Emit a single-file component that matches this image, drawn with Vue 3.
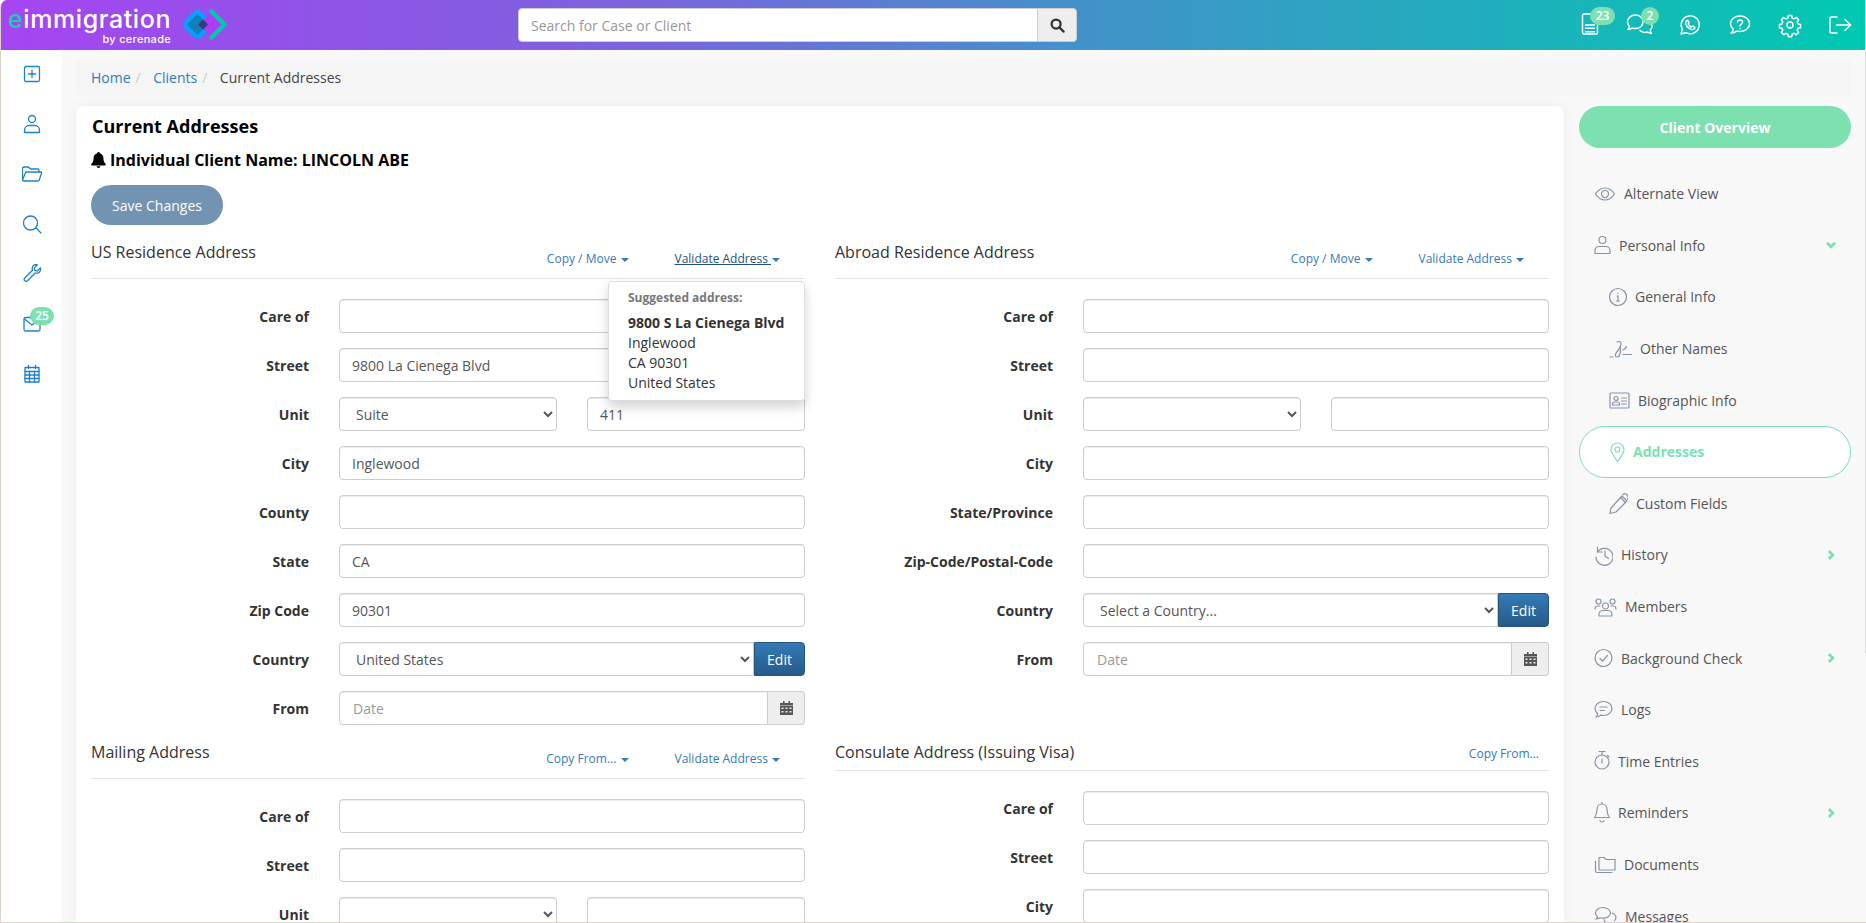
<template>
  <div class="page">
    <header class="topbar">
      <div class="logo">
        <div class="logo-text">
          <div class="logo-name"><span class="logo-e">e</span>immigration</div>
          <div class="logo-by">by cerenade</div>
        </div>
        <svg class="logo-mark" width="46" height="36" viewBox="0 0 46 36">
          <rect x="6.750" y="7.750" width="19.500" height="19.500" rx="4" transform="rotate(45 16.500 17.500)" fill="#1180b8" stroke="#0a9cff" stroke-width="4.500" />
          <path d="M30.500 5l12.500 12.500L30.500 30 18 17.500z" fill="#a93ff5" />
          <path d="M22 12.500l5 5-5 5-5-5z" fill="#2c3f78" />
          <path d="M30.500 4.500L43.500 17.500 30.500 30.500" fill="none" stroke="#00c9ae" stroke-width="4.500" stroke-linejoin="round" stroke-linecap="round" />
        </svg>
      </div>

      <div class="search">
        <input class="search-input" type="text" placeholder="Search for Case or Client" />
        <button class="search-btn">
          <svg width="15" height="15" viewBox="0 0 16 16" fill="none" stroke="#333" stroke-width="2.400">
            <circle cx="6.500" cy="6.500" r="4.800" />
            <path d="M10 10l4.500 4.500" stroke-linecap="round" />
          </svg>
        </button>
      </div>

      <nav class="top-icons">
        <div v-for="item in topIcons" :key="item.name" class="top-icon">
          <svg width="24" height="24" viewBox="0 0 24 24" fill="none" stroke="#fff" stroke-width="1.500" stroke-linecap="round" stroke-linejoin="round">
            <path v-for="d in item.paths" :key="d" :d="d" />
          </svg>
          <span v-if="item.badge" class="top-badge" :class="item.name">{{ item.badge }}</span>
        </div>
      </nav>
    </header>

    <div class="body">
      <aside class="leftbar">
        <div v-for="item in leftIcons" :key="item.name" class="left-icon">
          <svg width="20" height="20" viewBox="0 0 20 20" fill="none" stroke="#1f82c8" stroke-width="1.300" stroke-linecap="round" stroke-linejoin="round">
            <path v-for="d in item.paths" :key="d" :d="d" />
          </svg>
          <span v-if="item.badge" class="left-badge">{{ item.badge }}</span>
        </div>
      </aside>

      <div class="content">
        <div class="breadcrumb">
          <a class="crumb">Home</a><span class="sep">/</span>
          <a class="crumb">Clients</a><span class="sep">/</span>
          <span class="crumb-now">Current Addresses</span>
        </div>

        <div class="columns">
          <main class="card">
            <h1 class="title">Current Addresses</h1>
            <div class="client-name">
              <svg width="15" height="16" viewBox="0 0 15 16" fill="#000">
                <path d="M7.500 0a1.200 1.200 0 0 0-1.200 1.300C3.900 1.900 2.600 3.800 2.600 6c0 3.600-1.100 4.700-2.100 5.800-.5.600-.1 1.700.8 1.700h12.400c.9 0 1.300-1.100.8-1.700-1-1.100-2.100-2.200-2.100-5.800 0-2.200-1.300-4.100-3.700-4.700A1.200 1.200 0 0 0 7.500 0zM5.600 14.300a1.900 1.700 0 0 0 3.800 0z" />
              </svg>
              <span>Individual Client Name: LINCOLN ABE</span>
            </div>
            <button class="save-btn">Save Changes</button>

            <div class="form-grid">
              <section class="address">
                <div class="section-head">
                  <h2>US Residence Address</h2>
                  <div class="actions">
                    <a class="action">Copy / Move <i class="caret"></i></a>
                    <a class="action underlined">Validate Address <i class="caret"></i></a>
                  </div>
                </div>
                <div class="rows">
                  <div class="row"><label>Care of</label><input class="field" /></div>
                  <div class="row"><label>Street</label><input class="field" value="9800 La Cienega Blvd" /></div>
                  <div class="row">
                    <label>Unit</label>
                    <select class="field half"><option>Suite</option></select>
                    <input class="field half" value="411" />
                  </div>
                  <div class="row"><label>City</label><input class="field" value="Inglewood" /></div>
                  <div class="row"><label>County</label><input class="field" /></div>
                  <div class="row"><label>State</label><input class="field" value="CA" /></div>
                  <div class="row"><label>Zip Code</label><input class="field" value="90301" /></div>
                  <div class="row">
                    <label>Country</label>
                    <div class="group">
                      <select class="field joined"><option>United States</option></select>
                      <button class="edit-btn">Edit</button>
                    </div>
                  </div>
                  <div class="row">
                    <label>From</label>
                    <div class="group">
                      <input class="field joined" placeholder="Date" />
                      <span class="addon"><svg width="13" height="14" viewBox="0 0 13 14" fill="#555"><path d="M3 0h1.500v2H3zM8.500 0H10v2H8.500zM0 2h13v2.500H0zM0 5h13v9H0zM1.500 6.500v1.500h2V6.500zm4 0v1.500h2V6.500zm4 0v1.500h2V6.500zm-8 3.500v1.500h2V10zm4 0v1.500h2V10zm4 0v1.500h2V10z" fill-rule="evenodd" /></svg></span>
                    </div>
                  </div>
                </div>
                <div class="popover">
                  <div class="pop-title">Suggested address:</div>
                  <div class="pop-street">9800 S La Cienega Blvd</div>
                  <div>Inglewood</div>
                  <div>CA 90301</div>
                  <div>United States</div>
                </div>
              </section>

              <section class="address">
                <div class="section-head">
                  <h2>Abroad Residence Address</h2>
                  <div class="actions">
                    <a class="action">Copy / Move <i class="caret"></i></a>
                    <a class="action">Validate Address <i class="caret"></i></a>
                  </div>
                </div>
                <div class="rows">
                  <div class="row"><label>Care of</label><input class="field" /></div>
                  <div class="row"><label>Street</label><input class="field" /></div>
                  <div class="row">
                    <label>Unit</label>
                    <select class="field half"><option></option></select>
                    <input class="field half" />
                  </div>
                  <div class="row"><label>City</label><input class="field" /></div>
                  <div class="row"><label>State/Province</label><input class="field" /></div>
                  <div class="row"><label>Zip-Code/Postal-Code</label><input class="field" /></div>
                  <div class="row">
                    <label>Country</label>
                    <div class="group">
                      <select class="field joined"><option>Select a Country...</option></select>
                      <button class="edit-btn">Edit</button>
                    </div>
                  </div>
                  <div class="row">
                    <label>From</label>
                    <div class="group">
                      <input class="field joined" placeholder="Date" />
                      <span class="addon"><svg width="13" height="14" viewBox="0 0 13 14" fill="#555"><path d="M3 0h1.500v2H3zM8.500 0H10v2H8.500zM0 2h13v2.500H0zM0 5h13v9H0zM1.500 6.500v1.500h2V6.500zm4 0v1.500h2V6.500zm4 0v1.500h2V6.500zm-8 3.500v1.500h2V10zm4 0v1.500h2V10zm4 0v1.500h2V10z" fill-rule="evenodd" /></svg></span>
                    </div>
                  </div>
                </div>
              </section>

              <section class="address">
                <div class="section-head">
                  <h2>Mailing Address</h2>
                  <div class="actions">
                    <a class="action">Copy From... <i class="caret"></i></a>
                    <a class="action">Validate Address <i class="caret"></i></a>
                  </div>
                </div>
                <div class="rows">
                  <div class="row"><label>Care of</label><input class="field" /></div>
                  <div class="row"><label>Street</label><input class="field" /></div>
                  <div class="row">
                    <label>Unit</label>
                    <select class="field half"><option></option></select>
                    <input class="field half" />
                  </div>
                </div>
              </section>

              <section class="address consulate">
                <div class="section-head">
                  <h2>Consulate Address (Issuing Visa)</h2>
                  <div class="actions">
                    <a class="action">Copy From...</a>
                  </div>
                </div>
                <div class="rows">
                  <div class="row"><label>Care of</label><input class="field" /></div>
                  <div class="row"><label>Street</label><input class="field" /></div>
                  <div class="row"><label>City</label><input class="field" /></div>
                </div>
              </section>
            </div>
          </main>

          <aside class="sidemenu">
            <button class="overview-btn">Client Overview</button>
            <ul class="menu">
              <li v-for="item in menu" :key="item.label" class="menu-item" :class="{ sub: item.sub, active: item.active }">
                <svg :width="item.w" height="24" :viewBox="`0 0 ${item.w} 24`" fill="none" :stroke="item.active ? '#7de0b0' : '#8a93a6'" stroke-width="1.200" stroke-linecap="round" stroke-linejoin="round">
                  <path v-for="d in item.paths" :key="d" :d="d" />
                </svg>
                <span>{{ item.label }}</span>
                <svg v-if="item.arrow" class="arrow" :class="item.arrow" width="10" height="10" viewBox="0 0 10 10" fill="none" stroke="#7de0b0" stroke-width="2.800">
                  <path d="M2.800 1l4 4-4 4" />
                </svg>
              </li>
            </ul>
          </aside>
        </div>
      </div>
    </div>
    <div class="scroll-thumb"></div>
  </div>
</template>

<script setup>
const topIcons = [
  { name: 'docs', badge: '23', paths: ['M14 1H6a1.500 1.500 0 0 0-1.500 1.500v17A1.500 1.500 0 0 0 6 21h12a1.500 1.500 0 0 0 1.500-1.500V7', 'M7.500 12h9', 'M7.500 15.300h9', 'M7.500 18.700h9'] },
  { name: 'chats', badge: '2', paths: ['M7.500 2C3.500 2-.5 4.600-.5 9c0 1.800.8 3.400 2 4.500-.2 1.200-.8 2.400-1.700 3 1.700 0 3.200-.6 4.200-1.400 1 .3 2 .5 3.500.5 4 0 7.500-2.700 7.500-6.600S11.500 2 7.500 2z', 'M19 7c3 1 5 3.200 5 6 0 1.700-.7 3-1.800 4 .1 1 .6 2.400 1.300 3.500-1.400 0-2.800-.7-3.800-1.500-2 .7-5.700.6-7.700-1.500'] },
  { name: 'whatsapp', paths: ['M3 21l1.400-4.800A9 9 0 1 1 8 19.700z', 'M8.500 8c.4-.6 1.200-.8 1.600-.3l.9 1.800c.1.300 0 .6-.2.800l-.6.700c.6 1.300 1.600 2.300 3 3l.8-.7c.3-.2.500-.2.800-.1l1.700.9c.5.300.4 1.100-.2 1.700-1 1-2.500 1-4.300.1-2-1-3.700-2.800-4.300-4.700-.3-1.100 0-2.100.8-3z'] },
  { name: 'help', paths: ['M12 3c-5.300 0-9.500 3.300-9.500 7.800 0 2.300 1.100 4.200 2.800 5.600-.2 1.300-1 2.600-2.300 3.600 2.300 0 4.400-.8 5.700-1.900 1 .3 2.100.4 3.300.4 5.300 0 9.500-3.400 9.500-7.700S17.300 3 12 3z', 'M9.500 9c.2-1.300 1.200-2 2.500-2 1.400 0 2.500.9 2.500 2.100 0 1.900-2.500 2-2.500 3.900', 'M12 15.500v.3'] },
  { name: 'gear', paths: ['M10.300 2.500h3.400l.5 2.600 1.900.8 2.200-1.500 2.400 2.400-1.500 2.200.8 1.900 2.600.5v3.400l-2.600.5-.8 1.900 1.500 2.200-2.400 2.400-2.200-1.500-1.900.8-.5 2.600h-3.400l-.5-2.600-1.900-.8-2.200 1.500-2.400-2.400 1.500-2.200-.8-1.900-2.600-.5v-3.400l2.600-.5.8-1.900-1.500-2.200 2.400-2.400 2.200 1.500 1.900-.8z', 'M15 12a3 3 0 1 1-6 0 3 3 0 0 1 6 0z'] },
  { name: 'logout', paths: ['M9 4H3.500A1.500 1.500 0 0 0 2 5.500v13A1.500 1.500 0 0 0 3.500 20H9', 'M8.500 12h14', 'M17 6.500l5.500 5.500-5.500 5.500'] },
]

const leftIcons = [
  { name: 'new', paths: ['M4 2.500h12A1.500 1.500 0 0 1 17.500 4v12a1.500 1.500 0 0 1-1.500 1.500H4A1.500 1.500 0 0 1 2.500 16V4A1.500 1.500 0 0 1 4 2.500z', 'M10 6.500v7', 'M6.500 10h7'] },
  { name: 'user', paths: ['M10 1.500a3.500 3.500 0 1 1 0 7 3.500 3.500 0 0 1 0-7z', 'M2.500 18.500v-2c0-3 2.200-5 4.500-5h6c2.300 0 4.500 2 4.500 5v2z'] },
  { name: 'folder', paths: ['M.5 16V4.500A1.500 1.500 0 0 1 2 3h4.500l2 2h7a1.500 1.500 0 0 1 1.500 1.500V8', 'M.5 16l2.800-7a1.500 1.500 0 0 1 1.400-1H20l-2.800 8a1.500 1.500 0 0 1-1.400 1H1.500a1 1 0 0 1-1-1z'] },
  { name: 'search', paths: ['M8.500 2a7 7 0 1 1 0 14 7 7 0 0 1 0-14z', 'M14 14l5 5'] },
  { name: 'tools', paths: ['M18.500 3.800l-3.300 3.300-2.300-.7-.7-2.300 3.300-3.300c-2.800-.8-5.300 1-5.300 3.700 0 .7.100 1.200.3 1.800L2.800 14c-1.800 2 .8 4.400 2.700 2.700l7.700-7.700c3.100.9 6-1.400 5.300-5.200z'] },
  { name: 'mail', badge: '25', paths: ['M3.500 3.500h13A1.500 1.500 0 0 1 18 5v10.500a1.500 1.500 0 0 1-1.500 1.500h-13A1.500 1.500 0 0 1 2 15.500V5a1.500 1.500 0 0 1 1.500-1.500z', 'M2.500 5l7.500 6 7.500-6'] },
  { name: 'calendar', paths: ['M3 3.500h14V18H3z', 'M3 7.500h14', 'M3 11h14', 'M3 14.500h14', 'M7.500 7.500V18', 'M12.500 7.500V18', 'M6.500 1.500v3', 'M13.500 1.500v3'] },
]

const menu = [
  { label: 'Alternate View', w: 22, paths: ['M1.500 12C4 8 7 6 11 6s7 2 9.500 6c-2.500 4-5.500 6-9.500 6s-7-2-9.500-6z', 'M11 8.500a3.500 3.500 0 1 1 0 7 3.500 3.500 0 0 1 0-7z'] },
  { label: 'Personal Info', w: 17, arrow: 'down', paths: ['M8.500 3.500a3.500 3.500 0 1 1 0 7 3.500 3.500 0 0 1 0-7z', 'M1 20.500v-3c0-2.500 2-4 4-4h7c2 0 4 1.500 4 4v3z'] },
  { label: 'General Info', w: 18, sub: true, paths: ['M9 3.500a8.500 8.500 0 1 1 0 17 8.500 8.500 0 0 1 0-17z', 'M9 11v5', 'M7.500 16h3', 'M8 11h1', 'M9 8v.4'] },
  { label: 'Other Names', w: 23, sub: true, paths: ['M1 20h3', 'M8 20c-2.500 0-2-3 .5-6 2-2.500 3.500-5 3.500-7.500 0-2-2-2.500-4-1.500', 'M11 9.500c1 3 .5 10-2.500 10.500', 'M14 13c2-1 3-2 3.500-3.500', 'M14 17.500h8.500'] },
  { label: 'Biographic Info', w: 21, sub: true, paths: ['M2 5h17a1 1 0 0 1 1 1v13a1 1 0 0 1-1 1H2a1 1 0 0 1-1-1V6a1 1 0 0 1 1-1z', 'M7 8.500a2 2 0 1 1 0 4 2 2 0 0 1 0-4z', 'M3.500 17v-1c0-1.200 1-2 2-2h3c1 0 2 .8 2 2v1z', 'M12.500 10h5', 'M12.500 13h5', 'M12.500 16h5'] },
  { label: 'Addresses', w: 15, sub: true, active: true, paths: ['M7.500 3a6.500 6.500 0 0 1 6.500 6.500c0 3.500-3.500 8-6.500 12-3-4-6.500-8.500-6.500-12A6.500 6.500 0 0 1 7.500 3z', 'M7.500 7a2.500 2.500 0 1 1 0 5 2.500 2.500 0 0 1 0-5z'] },
  { label: 'Custom Fields', w: 19, sub: true, paths: ['M13 5l5 5-11 11-6 1.500L2 17z', 'M11.500 6.500l5 5', 'M14 3.500c1-1 2.500-1 3.500 0l1 1c1 1 1 2.500 0 3.500'] },
  { label: 'History', w: 19, arrow: 'right', paths: ['M3.500 4v5h5', 'M3.500 9A8.500 8.500 0 1 1 2 14', 'M11 8v5l3.500 2.500'] },
  { label: 'Members', w: 23, paths: ['M11.500 8a3 3 0 1 1 0 6 3 3 0 0 1 0-6z', 'M5 21v-1.500C5 17 7 15.500 9 15.500h5c2 0 4 1.500 4 4V21z', 'M4.500 4a2.500 2.500 0 1 1 0 5 2.500 2.500 0 0 1 0-5z', 'M1 14c0-2 1-3 3-3h2', 'M18.500 4a2.500 2.500 0 1 1 0 5 2.500 2.500 0 0 1 0-5z', 'M22 14c0-2-1-3-3-3h-2'] },
  { label: 'Background Check', w: 19, arrow: 'right', paths: ['M9.500 3.500a8.500 8.500 0 1 1 0 17 8.500 8.500 0 0 1 0-17z', 'M6 12.500l2.500 2.500 5-5.500'] },
  { label: 'Logs', w: 19, paths: ['M9.500 3.500c4.700 0 8.500 3 8.500 7s-3.800 7-8.500 7c-1 0-2-.1-2.800-.4-1 .9-2.800 2-4.700 1.900 1-.8 1.700-2 1.800-3.200C2.200 14.500 1 12.600 1 10.500c0-4 3.800-7 8.500-7z', 'M6 9h7', 'M6 12.500h4.500'] },
  { label: 'Time Entries', w: 16, paths: ['M8 6a7 7 0 1 1 0 14 7 7 0 0 1 0-14z', 'M8 3v3', 'M5 2.500h6', 'M8 10v4', 'M13.500 6.500l1.500 1.500'] },
  { label: 'Reminders', w: 16, arrow: 'right', paths: ['M8 3c-3 0-5 2.500-5 5.500 0 4-1 6-2.500 8h15C14 14.500 13 12.500 13 8.500 13 5.500 11 3 8 3z', 'M6 19.500a2 1.500 0 0 0 4 0', 'M8 1.500V3'] },
  { label: 'Documents', w: 22, paths: ['M5 4.500h5l2 2h9v10.500H5z', 'M1.500 8v10a1.500 1.500 0 0 0 1.500 1.500h15'] },
  { label: 'Messages', w: 23, paths: ['M9 3.500c-4 0-7.500 2.400-7.500 5.500 0 1.500.8 2.800 2 3.700-.2 1-.8 1.800-1.500 2.300 1.700 0 3-.5 4-1.200 1 .3 2 .4 3 .4 4 0 7.500-2.200 7.500-5.200S13 3.500 9 3.500z', 'M18 9c2.500 1 4 2.500 4 4.500 0 1.200-.6 2.300-1.600 3.100', 'M10 15.500c.5 2.500 3 4 6 4'] },
]
</script>

<style>
html, body {
  margin: 0;
  overflow: hidden;
}
</style>

<style scoped>
* {
  box-sizing: border-box;
}

.page {
  position: relative;
  height: 923px;
  overflow: hidden;
  display: flex;
  flex-direction: column;
  font-family: "Open Sans", sans-serif;
  font-size: 14px;
  color: #333;
  background: #f8f8f8;
  border-left: 1px solid #dfd0cc;
  border-bottom: 1px solid #dfd0cc;
  border-top-left-radius: 7px;
}

.topbar {
  height: 50px;
  flex: none;
  display: flex;
  align-items: center;
  margin-right: 1px;
  padding-left: 7px;
  background: linear-gradient(90deg, #a545f2 0%, #7d62dd 33%, #3f95c8 60%, #00c9b1 100%);
}

.logo {
  width: 510px;
  display: flex;
  align-items: center;
  gap: 10px;
}

.logo-text {
  width: 163px;
  text-align: right;
  color: #fff;
}

.logo-name {
  font-family: Inter, sans-serif;
  font-size: 25px;
  font-weight: 500;
  line-height: 27px;
  letter-spacing: 0.6px;
  white-space: nowrap;
}

.logo-e {
  color: #19cdb5;
}

.logo-by {
  font-family: Inter, sans-serif;
  font-size: 11px;
  font-weight: 500;
  line-height: 12px;
  letter-spacing: 0.3px;
}

.search {
  width: 559px;
  height: 34px;
  display: flex;
  background: #fff;
  border-radius: 4px;
  border: 1px solid #ccc;
}

.search-input {
  flex: 1;
  border: 0;
  outline: 0;
  padding: 0 12px;
  background: transparent;
  font: inherit;
  border-radius: 4px 0 0 4px;
}

.search-input::placeholder {
  color: #999;
}

.search-btn {
  width: 39px;
  border: 0;
  border-left: 1px solid #ccc;
  background: #eee;
  border-radius: 0 4px 4px 0;
  display: flex;
  align-items: center;
  justify-content: center;
}

.top-icons {
  margin-left: auto;
  display: flex;
}

.top-icon {
  position: relative;
  width: 50px;
  height: 24px;
  display: flex;
  justify-content: center;
}

.top-icon svg {
  overflow: visible;
}

.top-badge {
  position: absolute;
  top: -6px;
  height: 18px;
  border-radius: 9px;
  background: #7de0b0;
  color: #fff;
  font-size: 12px;
  font-weight: 600;
  line-height: 18px;
  text-align: center;
}

.top-badge.docs {
  left: 25px;
  width: 25px;
}

.top-badge.chats {
  left: 26px;
  width: 18px;
}

.body {
  flex: 1;
  min-height: 0;
  display: flex;
}

.leftbar {
  width: 60px;
  flex: none;
  background: #fff;
  padding-top: 14px;
  display: flex;
  flex-direction: column;
  align-items: center;
}

.left-icon {
  position: relative;
  height: 50px;
  margin-left: 2px;
}

.left-badge {
  position: absolute;
  left: 8px;
  top: -7px;
  width: 24px;
  height: 18px;
  border-radius: 9px;
  background: #7de0b0;
  color: #fff;
  font-size: 12px;
  font-weight: 600;
  line-height: 18px;
  text-align: center;
}

.content {
  flex: 1;
  min-width: 0;
  padding: 10px 15px 0;
  display: flex;
  flex-direction: column;
}

.breadcrumb {
  height: 36px;
  flex: none;
  background: #f5f5f5;
  border-radius: 4px;
  display: flex;
  align-items: center;
  padding: 0 0 1px 15px;
  white-space: nowrap;
}

.crumb {
  color: #337ab7;
}

.sep {
  color: #ccc;
  padding: 0 12.500px 0 5px;
}

.crumb-now {
  color: #444;
}

.columns {
  flex: 1;
  min-height: 0;
  display: flex;
  margin-top: 10px;
}

.card {
  width: 1488px;
  flex: none;
  background: #fff;
  border-radius: 8px 8px 0 0;
  padding: 7px 15px 0;
  overflow: hidden;
  box-shadow: 0 0 14px rgba(0, 0, 0, 0.05);
}

.title {
  margin: 0;
  padding-left: 1px;
  font-size: 18px;
  font-weight: 700;
  line-height: 26px;
  color: #000;
}

.client-name {
  margin-top: 8px;
  display: flex;
  align-items: center;
  gap: 4px;
  font-size: 16px;
  font-weight: 700;
  line-height: 26px;
  color: #000;
}

.save-btn {
  display: block;
  margin-top: 12px;
  width: 132px;
  height: 40px;
  border: 0;
  border-radius: 20px;
  background: #7393b2;
  color: #fff;
  font: inherit;
  font-weight: 500;
}

.form-grid {
  display: grid;
  grid-template-columns: 714px 714px;
  column-gap: 30px;
  row-gap: 15px;
  align-items: start;
  margin-top: 15px;
}

.address {
  position: relative;
}

.section-head {
  height: 39px;
  display: flex;
  align-items: flex-start;
  justify-content: space-between;
  border-bottom: 1px solid #e5e5e5;
  padding-right: 25px;
}

.consulate .section-head {
  height: 31px;
  padding-right: 10px;
}

.section-head h2 {
  margin: 0;
  font-size: 16px;
  font-weight: 400;
  line-height: 24px;
  color: #333;
}

.actions {
  display: flex;
  gap: 46px;
  padding-top: 10px;
  font-size: 12px;
  line-height: 18px;
  color: #337ab7;
}

.consulate .actions {
  padding-top: 5px;
}

.action {
  white-space: nowrap;
}

.underlined {
  color: #23527c;
  text-decoration: underline;
}

.caret {
  display: inline-block;
  vertical-align: middle;
  border-top: 4px solid #337ab7;
  border-left: 4px solid transparent;
  border-right: 4px solid transparent;
  margin-left: 1px;
}

.rows {
  margin-top: 20px;
  display: flex;
  flex-direction: column;
  gap: 15px;
}

.row {
  height: 34px;
  display: flex;
  align-items: center;
  gap: 30px;
}

.row label {
  width: 218px;
  flex: none;
  text-align: right;
  font-weight: 700;
  font-size: 14px;
}

.field {
  flex: 1;
  min-width: 0;
  height: 34px;
  padding: 0 12px;
  background: #fff;
  border: 1px solid #ccc;
  border-radius: 4px;
  font: inherit;
  color: #555;
  outline: 0;
  box-shadow: inset 0 1px 1px rgba(0, 0, 0, 0.075);
}

.field::placeholder {
  color: #999;
}

.group {
  flex: 1;
  min-width: 0;
  display: flex;
}

.joined {
  border-radius: 4px 0 0 4px;
}

input.joined {
  padding-left: 13px;
}

.edit-btn {
  width: 51px;
  height: 34px;
  flex: none;
  border: 1px solid #245580;
  border-radius: 0 4px 4px 0;
  background: linear-gradient(#337ab7, #265a88);
  color: #fff;
  font: inherit;
}

.addon {
  width: 37px;
  height: 34px;
  flex: none;
  display: flex;
  align-items: center;
  justify-content: center;
  background: #eee;
  border: 1px solid #ccc;
  border-left: 0;
  border-radius: 0 4px 4px 0;
}

.popover {
  position: absolute;
  left: 517px;
  top: 41px;
  width: 197px;
  height: 120px;
  padding: 5px 10px 0 19px;
  background: #fff;
  border: 1px solid #ddd;
  border-radius: 4px;
  box-shadow: 0 6px 12px rgba(0, 0, 0, 0.175);
  line-height: 20px;
  color: #333;
  white-space: nowrap;
}

.pop-title {
  font-size: 12px;
  font-weight: 700;
  color: #777;
  line-height: 22px;
  margin-bottom: 4px;
}

.pop-street {
  font-weight: 700;
}

.sidemenu {
  flex: 1;
  min-width: 0;
  padding-left: 15px;
}

.overview-btn {
  display: block;
  width: 100%;
  height: 42px;
  border: 0;
  border-radius: 21px;
  background: #7de0b0;
  color: #fff;
  font: inherit;
  font-weight: 700;
}

.menu {
  list-style: none;
  margin: 20px 0 0;
  padding: 0;
}

.menu-item {
  position: relative;
  height: 51.600px;
  display: flex;
  align-items: center;
  gap: 8px;
  padding-left: 15px;
  color: #555;
  white-space: nowrap;
}

.menu-item.sub {
  padding-left: 30px;
}

.menu-item.active {
  border: 1px solid #7de0b0;
  border-radius: 26px;
  background: #fff;
  color: #7de0b0;
  font-weight: 700;
}

.arrow {
  position: absolute;
  right: 15px;
}

.arrow.down {
  transform: rotate(90deg);
}

.scroll-thumb {
  position: absolute;
  top: 50px;
  right: 0;
  width: 1px;
  height: 603px;
  background: #dcdcdc;
}
</style>
